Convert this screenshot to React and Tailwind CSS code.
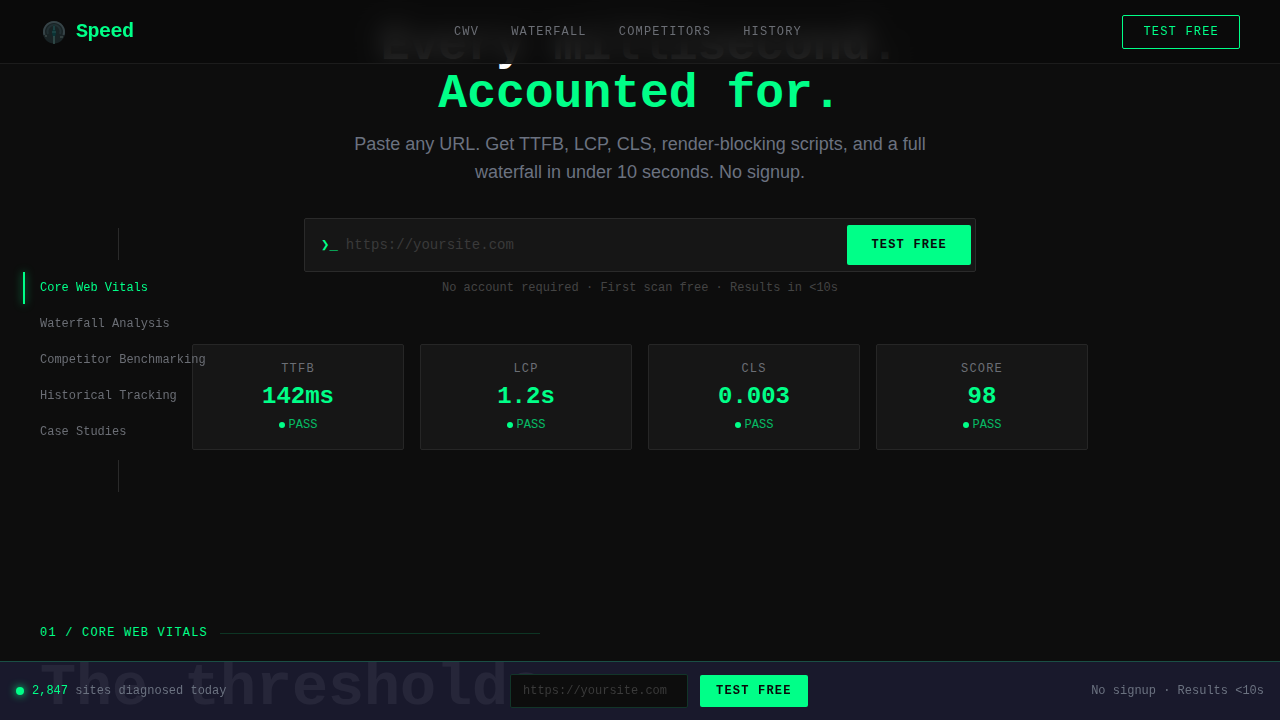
const navLinks = [
    { name: "CWV", href: "#cwv" },
    { name: "WATERFALL", href: "#waterfall" },
    { name: "COMPETITORS", href: "#competitors" },
    { name: "HISTORY", href: "#history" },
];

const sections = [
    { name: "Core Web Vitals", href: "#cwv" },
    { name: "Waterfall Analysis", href: "#waterfall" },
    { name: "Competitor Benchmarking", href: "#competitors" },
    { name: "Historical Tracking", href: "#history" },
    { name: "Case Studies", href: "#cases" },
];

const metrics = [
    { label: "TTFB", value: "142ms" },
    { label: "LCP", value: "1.2s" },
    { label: "CLS", value: "0.003" },
    { label: "SCORE", value: "98" },
];

function Logo() {
    return (
        <svg className="w-7 h-7" viewBox="0 0 28 28" fill="none" aria-hidden="true">
            <circle cx="14" cy="14.500" r="11" fill="#192325" />
            <path d="M4.500 17a10 10 0 1 1 19 0" stroke="#364347" strokeWidth="2" />
            <path d="M8 16a6.500 6.500 0 1 1 12 0" stroke="#223033" strokeWidth="2" />
            <path d="M14 6l2 9-1 4h-2l-1-4z" fill="#0b3436" />
            <path d="M14 8v4M12 14h4" stroke="#2b5352" />
            <path d="M14 18v8" stroke="#365452" strokeWidth="1.5" />
            <path d="M20 19h3M5 18h2" stroke="#4d5856" />
        </svg>
    );
}

function Navbar() {
    return (
        <>
            {/* frosted layer under the bar */}
            <div className="fixed top-0 inset-x-0 z-40 h-16 backdrop-blur-md" />
            <header className="fixed top-0 inset-x-0 z-50 h-16 px-10 flex items-center justify-between bg-[#0a0a0a]/85 border-b border-[#1c1c1c]">
                <a href="#top" className="flex items-center gap-2 text-xl font-bold tracking-tight text-[#00ff88]">
                    <Logo />
                    <span>Speed</span>
                </a>
                <nav className="flex items-center gap-8">
                    {navLinks.map((link) => (
                        <a key={link.name} href={link.href} className="text-xs tracking-widest text-[#6b6e75]">
                            {link.name}
                        </a>
                    ))}
                </nav>
                <button className="h-[34px] px-5 rounded-xs border border-[#00ff88] text-xs tracking-widest text-[#00ff88]">
                    TEST FREE
                </button>
            </header>
        </>
    );
}

function SideNav() {
    return (
        <aside className="fixed left-6 top-1/2 -translate-y-1/2 z-40 w-[189px] flex flex-col items-center gap-3">
            <div className="w-px h-8 bg-[#2a2a2a]" />
            <nav className="w-full flex flex-col gap-1">
                {sections.map((item, i) => (
                    <a
                        key={item.name}
                        href={item.href}
                        className={`relative h-8 pl-4 flex items-center text-xs whitespace-nowrap ${i === 0 ? "text-[#00ff88]" : "text-[#6b6e75]"}`}
                    >
                        {i === 0 && (
                            <span className="absolute -left-px inset-y-0 w-0.5 bg-[#00ff88] shadow-[0_0_8px_rgba(0,255,136,0.7)]" />
                        )}
                        {item.name}
                    </a>
                ))}
            </nav>
            <div className="w-px h-8 bg-[#2a2a2a]" />
        </aside>
    );
}

function MetricCard({ label, value }) {
    return (
        <div className="h-[106px] pt-4 flex flex-col items-center rounded-xs bg-[#161616] border border-[#262626]">
            <div className="text-xs tracking-widest text-[#6b6e75]">{label}</div>
            <div className="mt-1 text-2xl font-bold text-[#00ff88]">{value}</div>
            <div className="mt-1 flex items-center gap-1 text-xs text-[#00ff88]">
                <span className="w-1.5 h-1.5 rounded-full bg-[#00ff88]" />
                <span className="opacity-70">PASS</span>
            </div>
        </div>
    );
}

function Hero() {
    return (
        <section id="top" className="pt-[22px] flex flex-col items-center">
            <h1 className="text-5xl leading-none font-bold text-center text-white">
                Every millisecond.
                <br />
                <span className="text-[#00ff88]">Accounted for.</span>
            </h1>
            <p className="mt-3 max-w-xl text-center text-lg leading-7 text-[#6b7280] font-['Liberation_Sans',Arial,sans-serif]">
                Paste any URL. Get TTFB, LCP, CLS, render-blocking scripts, and a full waterfall in under 10 seconds. No signup.
            </p>
            <form className="mt-8 w-full max-w-2xl h-[54px] pl-4 pr-1 flex items-center rounded-xs bg-[#161616] border border-[#2a2a2a]">
                <label htmlFor="hero-url" className="text-sm text-[#00ff88]">❯_</label>
                <input
                    id="hero-url"
                    type="url"
                    placeholder="https://yoursite.com"
                    className="flex-1 min-w-0 px-2 text-sm bg-transparent outline-none text-white placeholder:text-[#3a3a3a]"
                />
                <button type="button" className="h-10 px-6 rounded-xs bg-[#00ff88] text-xs font-bold tracking-widest text-[#0a0a0a]">
                    TEST FREE
                </button>
            </form>
            <p className="mt-2 text-xs text-[#444444]">No account required · First scan free · Results in &lt;10s</p>
            <div className="mt-12 w-full max-w-4xl grid grid-cols-4 gap-4">
                {metrics.map((m) => (
                    <MetricCard key={m.label} label={m.label} value={m.value} />
                ))}
            </div>
        </section>
    );
}

function Vitals() {
    return (
        <section id="cwv" className="mt-[175px] px-10">
            <div className="flex items-center gap-3">
                <span className="text-xs leading-[17px] tracking-widest text-[#00ff88]">01 / CORE WEB VITALS</span>
                <div className="w-80 h-px bg-[#0d3524]" />
            </div>
            <h2 className="mt-4 text-6xl leading-none font-bold text-white">
                The thresholds
            </h2>
        </section>
    );
}

function BottomBar() {
    return (
        <footer className="fixed bottom-0 inset-x-0 z-50 h-[59px] px-4 flex items-center justify-between bg-[#1a1a2e]/95 border-t border-[#1a4f45] text-xs">
            <div className="flex items-center gap-2">
                <span className="w-2 h-2 rounded-full bg-[#00ff88] shadow-[0_0_8px_#00ff88]" />
                <p className="text-[#6b7280]">
                    <span className="text-[#00ff88]">2,847</span> sites diagnosed today
                </p>
            </div>
            <form className="flex items-center gap-3">
                <input
                    type="url"
                    aria-label="Website URL"
                    placeholder="https://yoursite.com"
                    className="w-[178px] h-[34px] px-3 rounded-xs bg-[#0d0d0d] border border-[#123529] outline-none text-white placeholder:text-[#3a3a3a]"
                />
                <button type="button" className="h-8 px-4 rounded-xs bg-[#00ff88] font-bold tracking-widest text-[#0a0a0a]">
                    TEST FREE
                </button>
            </form>
            <p className="text-[#6b7280]">No signup · Results &lt;10s</p>
        </footer>
    );
}

export default function App() {
    return (
        <div className="min-h-screen bg-[#0d0d0d] font-['Liberation_Mono',monospace]">
            <Navbar />
            <SideNav />
            <main>
                <Hero />
                <Vitals />
            </main>
            <BottomBar />
        </div>
    );
}
